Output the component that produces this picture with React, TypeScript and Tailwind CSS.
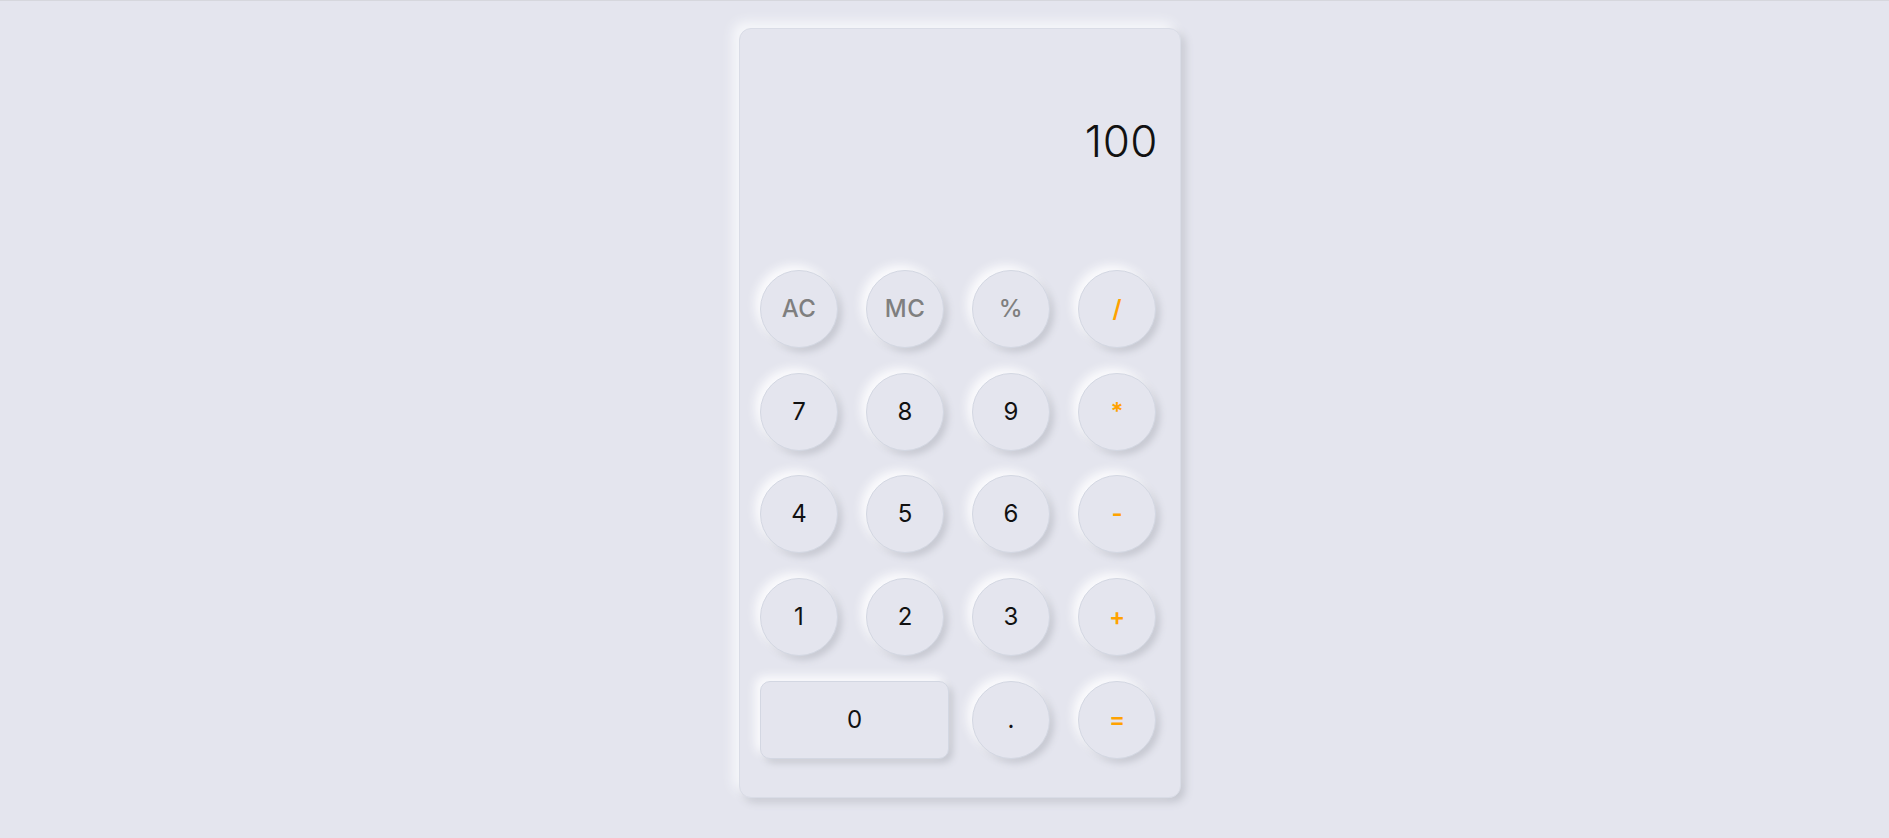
type Key = {
  label: string;
  tone: "num" | "fn" | "op";
  wide?: boolean;
};

const keys: Key[] = [
  { label: "AC", tone: "fn" },
  { label: "MC", tone: "fn" },
  { label: "%", tone: "fn" },
  { label: "/", tone: "op" },
  { label: "7", tone: "num" },
  { label: "8", tone: "num" },
  { label: "9", tone: "num" },
  { label: "*", tone: "op" },
  { label: "4", tone: "num" },
  { label: "5", tone: "num" },
  { label: "6", tone: "num" },
  { label: "-", tone: "op" },
  { label: "1", tone: "num" },
  { label: "2", tone: "num" },
  { label: "3", tone: "num" },
  { label: "+", tone: "op" },
  { label: "0", tone: "num", wide: true },
  { label: ".", tone: "num" },
  { label: "=", tone: "op" }
];

const toneClass = {
  num: "text-[#111111]",
  fn: "text-[#7f7f7f] font-medium tracking-[0.5px]",
  op: "text-[#ffa200] font-semibold"
};

export default function App() {
  return (
    <div className="min-h-[838px] border-t border-[#d6d7dd] bg-[#e4e5ee] font-['Inter','Noto_Sans',sans-serif]">
      <div className="flex justify-center pl-[31px] pt-[27px]">
        <div className="h-[770px] w-[442px] rounded-[12px] border border-[#d9dce6] bg-[#e4e5ee] shadow-[-6px_-6px_12px_#f7f8fb,4px_4px_8px_#c3c5ce]">
          <div className="flex h-[241px] items-start justify-end pr-[22px] pt-[90px]">
            <p className="text-[44px] leading-none font-light tracking-[0.5px] text-[#111111]">100</p>
          </div>
          <div className="grid grid-cols-[repeat(4,78px)] justify-between gap-y-[24.7px] pl-[20px] pr-[24px]">
            {keys.map((key) => (
              <button
                key={key.label}
                className={`flex h-[78px] items-center justify-center border border-[#d3d7e2] bg-[#e4e5ee] text-[24px] shadow-[-5px_-5px_10px_#fbfbfd,4px_4px_7px_#c6c8d1] ${
                  key.wide ? "col-span-2 w-[189px] rounded-[10px]" : "w-[78px] rounded-full"
                } ${toneClass[key.tone]}`}
              >
                {key.label}
              </button>
            ))}
          </div>
        </div>
      </div>
    </div>
  );
}
